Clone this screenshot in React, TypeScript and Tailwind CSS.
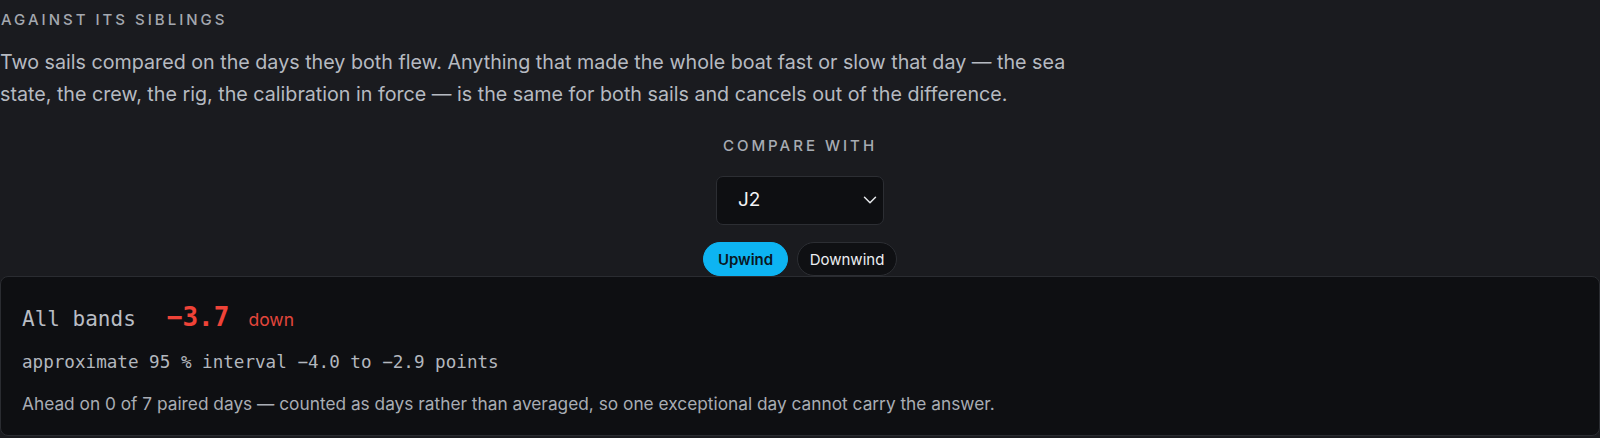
import { ChevronDown } from "lucide-react";
import { useState } from "react";

const SIBLINGS = ["J1", "J2", "J3", "A2"];

type Side = "upwind" | "downwind";

function SideToggle({ side, onChange }: { side: Side; onChange: (s: Side) => void }) {
  const opts: { id: Side; label: string }[] = [
    { id: "upwind", label: "Upwind" },
    { id: "downwind", label: "Downwind" },
  ];
  return (
    <div className="flex items-center gap-[9px]">
      {opts.map((o) => (
        <button
          key={o.id}
          onClick={() => onChange(o.id)}
          className={`h-[34px] rounded-full border text-[15px] leading-none ${
            o.id === side
              ? "w-[85px] bg-[#0db4f2] border-[#0db4f2] text-[#0a1722] font-semibold"
              : "w-[100px] bg-[#0f1013] border-[#2c2e33] text-[#eceef1] font-normal"
          }`}
        >
          {o.label}
        </button>
      ))}
    </div>
  );
}

export default function App() {
  const [sibling, setSibling] = useState("J2");
  const [side, setSide] = useState<Side>("upwind");

  return (
    <div className="min-h-screen bg-[#1a1b1f] font-['Inter',sans-serif] pt-[10px]">
      <h2 className="text-[15px] leading-[20px] font-medium uppercase tracking-[0.2em] text-[#a4a8af] pl-[1px]">
        Against its siblings
      </h2>
      <p className="mt-[16px] max-w-[1100px] text-[19.7px] leading-[32px] text-[#b6bac1]">
        Two sails compared on the days they both flew. Anything that made the whole boat fast or slow that day — the sea
        state, the crew, the rig, the calibration in force — is the same for both sails and cancels out of the difference.
      </p>

      <div className="mt-[26px] flex flex-col items-center">
        <div className="text-[15px] leading-[20px] font-medium uppercase tracking-[0.2em] text-[#a8acb3]">
          Compare with
        </div>
        <div className="relative mt-[20px] w-[168px] h-[49px]">
          <select
            value={sibling}
            onChange={(e) => setSibling(e.target.value)}
            className="appearance-none w-full h-full rounded-[7px] border border-[#2c2e33] bg-[#0e0f12] pl-[21px] text-[19px] text-[#f2f3f5] outline-none"
          >
            {SIBLINGS.map((s) => (
              <option key={s} value={s}>
                {s}
              </option>
            ))}
          </select>
          <ChevronDown
            size={22}
            strokeWidth={1.6}
            className="pointer-events-none absolute right-[3px] top-[13px] text-[#e6e8eb]"
          />
        </div>
        <div className="mt-[17px]">
          <SideToggle side={side} onChange={setSide} />
        </div>
      </div>

      <div className="h-[160px] rounded-[8px] border border-[#2a2c31] bg-[#0e0f12] px-[21px] pt-[20px]">
        <div className="flex items-baseline font-['DejaVu_Sans_Mono',monospace] leading-[40px]">
          <span className="text-[21px] text-[#b9bdc4]">All bands</span>
          <span className="ml-[31px] text-[26px] font-bold text-[#ef4338]">−3.7</span>
          <span className="ml-[19px] font-['Inter',sans-serif] text-[17.5px] text-[#e2463c]">down</span>
        </div>
        <div className="mt-[10px] font-['DejaVu_Sans_Mono',monospace] text-[17.6px] leading-[24px] text-[#b3b7be]">
          approximate 95 % interval −4.0 to −2.9 points
        </div>
        <div className="mt-[18px] text-[17.3px] leading-[24px] text-[#a9adb4]">
          Ahead on 0 of 7 paired days — counted as days rather than averaged, so one exceptional day cannot carry the
          answer.
        </div>
      </div>
    </div>
  );
}
